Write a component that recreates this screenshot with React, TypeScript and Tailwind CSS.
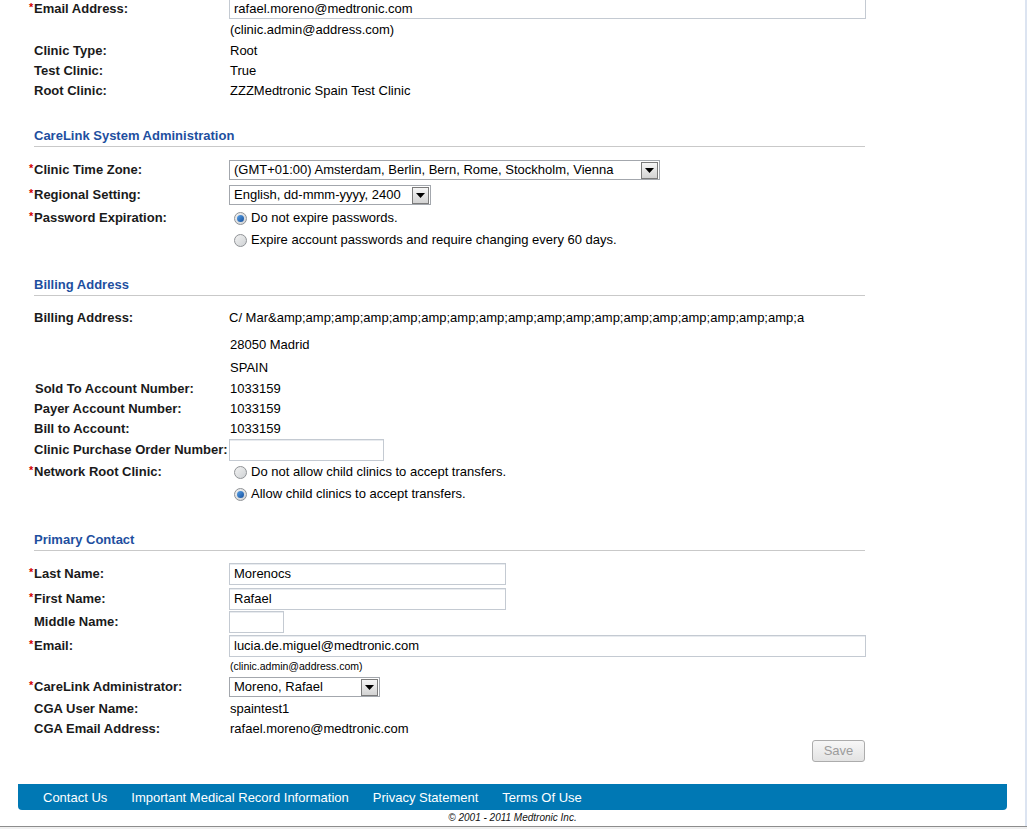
import type { ReactNode } from "react";

const labelCls = "min-w-[201px] whitespace-nowrap font-bold text-[13px] text-[#1a1a1a]";

function Req({ on }: { on?: boolean }) {
  return (
    <span className="relative -top-[2px] inline-block w-[5px] text-[11px] font-bold leading-none text-[#d40000]">
      {on ? "*" : ""}
    </span>
  );
}

function Row({
  req,
  label,
  children,
  className = "h-[20px]",
  top = false,
  indent = false,
}: {
  req?: boolean;
  label?: string;
  children?: ReactNode;
  className?: string;
  top?: boolean;
  indent?: boolean;
}) {
  return (
    <div className={`flex ${top ? "items-start" : "items-center"} ${className}`}>
      <div className={`${labelCls} ${top ? "h-[22px] leading-[22px]" : ""}`}>
        <Req on={req} />
        <span className={indent ? "pl-[1px]" : ""}>{label}</span>
      </div>
      <div className="text-[13px] text-black">{children}</div>
    </div>
  );
}

function Section({ title, className }: { title: string; className: string }) {
  return (
    <div className={`ml-[5px] w-[831px] border-b border-[#c9c9c9] pb-[2px] text-[13px] font-bold leading-[16px] text-[#1e4f9f] ${className}`}>
      {title}
    </div>
  );
}

function TextBox({ value, w, h = "h-[22px]" }: { value?: string; w: string; h?: string }) {
  return (
    <div
      className={`${w} ${h} -ml-[1px] flex items-center border border-[#c4cad2] bg-white pl-[4px] text-[13px] text-black shadow-[inset_0_1px_0_#e8ebef]`}
    >
      {value}
    </div>
  );
}

function Select({ value, w }: { value: string; w: string }) {
  return (
    <div className={`${w} -ml-[1px] flex h-[20px] items-center justify-between border border-[#a3a7ad] bg-white pl-[4px] pr-[1px] text-[13px] text-black`}>
      <span className="whitespace-nowrap">{value}</span>
      <span className="flex h-[17px] w-[17px] items-center justify-center border border-[#7b7b7b] bg-gradient-to-b from-[#f6f6f6] to-[#d3d3d3]">
        <svg width="9" height="5" viewBox="0 0 9 5">
          <path d="M0 0H9L4.5 5Z" fill="#000" />
        </svg>
      </span>
    </div>
  );
}

function Radio({ checked, label }: { checked?: boolean; label: string }) {
  return (
    <div className="flex h-[22px] items-center text-[13px] text-black">
      <span className="ml-[4px] mr-[4px] flex h-[13px] w-[13px] items-center justify-center rounded-full border border-[#8f9296] bg-gradient-to-br from-[#f2f2f2] to-[#cfd2d5]">
        {checked && (
          <span className="h-[7px] w-[7px] rounded-full bg-gradient-to-br from-[#5aa2e6] to-[#134f9e]" />
        )}
      </span>
      {label}
    </div>
  );
}

export default function App() {
  return (
    <div className="flex h-[829px] w-[1027px] flex-col overflow-hidden bg-white font-['Liberation_Sans',Arial,sans-serif]">
      <div className="flex min-h-0 flex-1">
        <div className="flex w-[1025px] flex-col pl-[29px]">
          {/* clinic details */}
          <div className="-mt-[2px]">
            <Row req label="Email Address:" className="h-[21px]">
              <TextBox value="rafael.moreno@medtronic.com" w="w-[637px]" h="h-[21px]" />
            </Row>
            <Row className="h-[22px]">(clinic.admin@address.com)</Row>
            <Row label="Clinic Type:">Root</Row>
            <Row label="Test Clinic:">True</Row>
            <Row label="Root Clinic:">ZZZMedtronic Spain Test Clinic</Row>
          </div>

          <Section title="CareLink System Administration" className="mt-[27px]" />
          <Row req label="Clinic Time Zone:" className="mt-[13px] h-[20px]">
            <Select value="(GMT+01:00) Amsterdam, Berlin, Bern, Rome, Stockholm, Vienna" w="w-[431px]" />
          </Row>
          <Row req label="Regional Setting:" className="mt-[5px] h-[20px]">
            <Select value="English, dd-mmm-yyyy, 2400" w="w-[202px]" />
          </Row>
          <Row req label="Password Expiration:" className="mt-[2px]" top>
            <Radio checked label="Do not expire passwords." />
            <Radio label="Expire account passwords and require changing every 60 days." />
          </Row>

          {/* billing */}
          <Section title="Billing Address" className="mt-[26px]" />
          <Row label="Billing Address:" className="mt-[11px] h-[22px]">
            <span className="-ml-[1px]">
              C/ Mar&amp;amp;amp;amp;amp;amp;amp;amp;amp;amp;amp;amp;amp;amp;amp;amp;amp;amp;amp;a
            </span>
          </Row>
          <Row className="mt-[5px] h-[22px]">28050 Madrid</Row>
          <Row className="mt-[1px] h-[22px]">SPAIN</Row>
          <Row label="Sold To Account Number:" className="h-[20px]" indent>
            1033159
          </Row>
          <Row label="Payer Account Number:">1033159</Row>
          <Row label="Bill to Account:">1033159</Row>
          <Row label="Clinic Purchase Order Number:" className="h-[22px]">
            <TextBox w="w-[155px]" />
          </Row>
          <Row req label="Network Root Clinic:" className="" top>
            <Radio label="Do not allow child clinics to accept transfers." />
            <Radio checked label="Allow child clinics to accept transfers." />
          </Row>

          {/* primary contact */}
          <Section title="Primary Contact" className="mt-[27px]" />
          <Row req label="Last Name:" className="mt-[12px] h-[22px]">
            <TextBox value="Morenocs" w="w-[277px]" />
          </Row>
          <Row req label="First Name:" className="mt-[3px] h-[22px]">
            <TextBox value="Rafael" w="w-[277px]" />
          </Row>
          <Row label="Middle Name:" className="mt-[1px] h-[22px]">
            <TextBox w="w-[55px]" />
          </Row>
          <Row req label="Email:" className="mt-[2px] h-[22px]">
            <TextBox value="lucia.de.miguel@medtronic.com" w="w-[637px]" />
          </Row>
          <Row className="h-[18px]">
            <span className="text-[10.5px]">(clinic.admin@address.com)</span>
          </Row>
          <Row req label="CareLink Administrator:" className="mt-[2px] h-[20px]">
            <Select value="Moreno, Rafael" w="w-[151px]" />
          </Row>
          <Row label="CGA User Name:" className="mt-[2px] h-[20px]">
            spaintest1
          </Row>
          <Row label="CGA Email Address:">rafael.moreno@medtronic.com</Row>

          <div className="flex w-[836px] justify-end">
            <button
              disabled
              className="mt-[1px] h-[22px] w-[53px] rounded-[3px] border border-[#acacac] bg-gradient-to-b from-[#f7f7f7] to-[#e3e3e3] text-[13px] text-[#9c9c9c]"
            >
              Save
            </button>
          </div>

          {/* footer */}
          <div className="-ml-[11px] mt-[22px] flex h-[26px] w-[989px] items-center gap-[24px] rounded-b-[4px] bg-[#0078b4] pl-[25px] pt-[2px] text-[13px] text-white">
            <span>Contact Us</span>
            <span>Important Medical Record Information</span>
            <span>Privacy Statement</span>
            <span>Terms Of Use</span>
          </div>
          <div className="-ml-[11px] flex h-[15px] w-[989px] items-center justify-center text-[10px] italic text-[#111]">
            © 2001 - 2011 Medtronic Inc.
          </div>
        </div>
        <div className="w-[2px] bg-[#dce4f1]" />
      </div>
      <div className="h-[3px] border-t border-[#8d8d8d] bg-[#f0f0f0]" />
    </div>
  );
}
